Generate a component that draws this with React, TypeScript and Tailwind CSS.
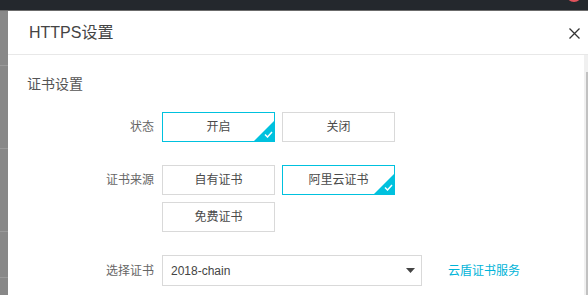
import React from "react";

const FONT = "font-['Liberation_Sans','Noto_Sans_CJK_SC',sans-serif]";

function Check() {
  return (
    <span className="absolute right-0 bottom-0 w-0 h-0 border-l-[20px] border-l-transparent border-b-[20px] border-b-[#00c1de]">
      <svg
        className="absolute"
        style={{ left: -10, top: 10 }}
        width="9"
        height="7"
        viewBox="0 0 9 7"
        fill="none"
      >
        <path d="M1 3.5 L3.5 6 L8 1" stroke="#fff" strokeWidth="1.5" />
      </svg>
    </span>
  );
}

function Opt({ label, active }: { label: string; active?: boolean }) {
  return (
    <div
      className={
        "relative w-[113px] h-[30px] flex items-center justify-center text-[12px] text-[#4a4a4a] bg-white border " +
        (active ? "border-[#00c1de]" : "border-[#d9d9d9]")
      }
    >
      {label}
      {active && <Check />}
    </div>
  );
}

export default function App() {
  return (
    <div className={"w-[588px] h-[295px] overflow-hidden flex flex-col bg-[#8a8a8a] " + FONT}>
      <div className="h-[10px] bg-[#24282d] relative shrink-0">
        <div className="absolute left-[566px] top-[-14px] w-[16px] h-[16px] rounded-full bg-[#e2535c]" />
      </div>
      <div className="h-px bg-[#6b6b6b] shrink-0" />
      <div className="flex flex-1 min-h-0">
        <div className="w-[8px] shrink-0 bg-[#888] flex flex-col">
          <div className="h-[54px]" />
          <div className="h-px bg-[#9a9a9a]" />
          <div className="h-[82px]" />
          <div className="h-px bg-[#9a9a9a]" />
          <div className="h-[82px]" />
          <div className="h-px bg-[#9a9a9a]" />
          <div className="h-[45px]" />
          <div className="h-px bg-[#9a9a9a]" />
        </div>
        <div className="flex-1 bg-white flex flex-col min-w-0">
          <div className="h-[44px] shrink-0 border-b border-[#e8e8e8] flex items-center justify-between pl-[21px] pr-[8px]">
            <span className="text-[16px] text-[#444] leading-none">HTTPS设置</span>
            <svg width="11" height="11" viewBox="0 0 11 11" className="mt-[1px]">
              <path d="M0.5 0.5 L10.5 10.5 M10.5 0.5 L0.5 10.5" stroke="#333" strokeWidth="1.3" />
            </svg>
          </div>
          <div className="flex flex-1 min-h-0">
            <div className="flex-1 pt-[19px]">
              <div className="pl-[19px] text-[14px] leading-[20px] text-[#555]">证书设置</div>
              <div className="mt-[18px] flex items-center">
                <div className="w-[146px] text-right text-[12px] text-[#666]">状态</div>
                <div className="ml-2 flex gap-[7px]">
                  <Opt label="开启" active />
                  <Opt label="关闭" />
                </div>
              </div>
              <div className="mt-[23px] flex items-start">
                <div className="w-[146px] h-[30px] flex items-center justify-end text-[12px] text-[#666]">证书来源</div>
                <div className="ml-2 w-[233px] flex flex-wrap gap-[7px]">
                  <Opt label="自有证书" />
                  <Opt label="阿里云证书" active />
                  <Opt label="免费证书" />
                </div>
              </div>
              <div className="mt-[23px] flex items-center">
                <div className="w-[146px] text-right text-[12px] text-[#666]">选择证书</div>
                <div className="ml-2 w-[260px] h-[31px] border border-[#d9d9d9] flex items-center justify-between pl-[8px] pr-[6px]">
                  <span className="text-[12px] text-[#444]">2018-chain</span>
                  <svg width="9" height="5" viewBox="0 0 9 5">
                    <path d="M0 0 H9 L4.5 5 Z" fill="#444" />
                  </svg>
                </div>
                <a className="ml-[26px] text-[12px] text-[#00b4d8]">云盾证书服务</a>
              </div>
            </div>
            <div className="w-[4px] shrink-0 bg-[#f0f0f0] flex justify-end">
              <div className="w-[2px] mt-[17px] h-[400px] bg-[#c1c1c1]" />
            </div>
          </div>
        </div>
      </div>
    </div>
  );
}
